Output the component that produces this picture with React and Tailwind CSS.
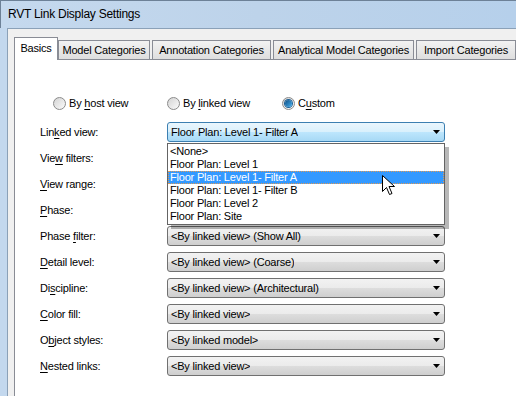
const TABS = ['Model Categories', 'Annotation Categories', 'Analytical Model Categories', 'Import Categories']

const TAB_W = [92, 119, 141, 100]

const LIST = ['<None>', 'Floor Plan: Level 1', 'Floor Plan: Level 1- Filter A', 'Floor Plan: Level 1- Filter B', 'Floor Plan: Level 2', 'Floor Plan: Site']

// label split as [before, mnemonic, after]
const ROWS = [
  { label: ['Lin', 'k', 'ed view:'], value: 'Floor Plan: Level 1- Filter A', open: true },
  { label: ['Vie', 'w', ' filters:'] },
  { label: ['', 'V', 'iew range:'] },
  { label: ['', 'P', 'hase:'] },
  { label: ['Phase ', 'f', 'ilter:'], value: '<By linked view> (Show All)' },
  { label: ['', 'D', 'etail level:'], value: '<By linked view> (Coarse)' },
  { label: ['Di', 's', 'cipline:'], value: '<By linked view> (Architectural)' },
  { label: ['', 'C', 'olor fill:'], value: '<By linked view>' },
  { label: ['O', 'b', 'ject styles:'], value: '<By linked model>' },
  { label: ['', 'N', 'ested links:'], value: '<By linked view>' },
]

function Mnemonic({ parts }) {
  return (
    <span>
      {parts[0]}
      <span className="underline underline-offset-[2px]">{parts[1]}</span>
      {parts[2]}
    </span>
  )
}

function Arrow() {
  return (
    <svg width="7" height="4" viewBox="0 0 7 4" className="shrink-0">
      <path d="M0 0h7L3.5 4z" fill="#000" />
    </svg>
  )
}

function Radio({ checked, label, className }) {
  return (
    <div className={'flex h-[13px] items-center gap-[3px] ' + (className || '')}>
      <span className="flex h-[13px] w-[13px] items-center justify-center rounded-full border border-[#8b8b8b] bg-gradient-to-br from-[#d4d4d4] to-[#fbfbfb]">
        {checked && (
          <span className="h-[7px] w-[7px] rounded-full bg-gradient-to-br from-[#0c4f86] to-[#49b2f0] ring-1 ring-[#1b5f95]" />
        )}
      </span>
      <Mnemonic parts={label} />
    </div>
  )
}

function Combo({ value, open }) {
  const skin = open
    ? 'border-[#3c7fb1] bg-[linear-gradient(#eaf6fd,#d9f0fc_50%,#bee6fd_50%,#a7d9f5)]'
    : 'border-[#707070] bg-[linear-gradient(#f2f2f2,#ebebeb_50%,#dddddd_50%,#cfcfcf)]'
  return (
    <div className={'flex h-[20px] w-[278px] items-center justify-between rounded-[3px] border pl-[3px] pr-[4px] ' + skin}>
      <span className="truncate">{value}</span>
      {value && <Arrow />}
    </div>
  )
}

function DropList() {
  return (
    <div className="absolute left-0 top-[21px] z-20 w-[278px] border border-[#646464] bg-white py-px shadow-[4px_4px_0_rgba(0,0,0,0.28)]">
      {LIST.map((item, i) => (
        <div
          key={item}
          className={
            'flex h-[13px] items-center pl-[2px] leading-none ' +
            (i === 2 ? 'bg-[#3399ff] text-white outline-1 outline-dotted -outline-offset-1 outline-[#e09a55]' : '')
          }
        >
          {item}
        </div>
      ))}
    </div>
  )
}

function Cursor() {
  return (
    <svg width="13" height="21" viewBox="0 0 13 21" className="absolute left-[382px] top-[175px] z-30">
      <path d="M0.5 0.5v16l4-4 3 7 2.5-1-3-7h5.5z" fill="#fff" stroke="#000" strokeWidth="1" strokeLinejoin="miter" />
    </svg>
  )
}

export default function App() {
  return (
    <div className="relative h-[396px] w-[516px] overflow-hidden bg-[#c3d8ee] font-['Liberation_Sans',Arial,sans-serif] text-[11px] tracking-[-0.2px] text-black">
      <Cursor />
      <div className="flex h-[28px] items-end border-l border-t border-[#6d8197] bg-gradient-to-r from-[#c5d9ee] via-[#bdd3ea] to-[#b6d0eb] pb-[5px] pl-[7px] text-[12px] tracking-[-0.25px]">
        RVT Link Display Settings
      </div>

      <div className="ml-[7px] h-[368px] border-l border-t border-[#8ba1b8] bg-[#f0f0f0] pl-[6px] pt-[8px]">
        <div className="flex h-[22px] items-end">
          <div className="relative z-10 -mb-px flex h-[23px] w-[46px] items-center justify-center border border-b-0 border-[#898c95] bg-white pb-[2px]">
            Basics
          </div>
          {TABS.map((t, i) => (
            <div
              key={t}
              style={{ width: TAB_W[i] }}
              className={'flex h-[19px] shrink-0 items-center justify-center border border-b-0 border-[#898c95] bg-gradient-to-b from-[#f2f2f2] to-[#dedede] ' + (i ? 'ml-[2px]' : '')}
            >
              {t}
            </div>
          ))}
        </div>

        <div className="h-[340px] w-[520px] border-l border-t border-[#898c95] bg-white">
          <div className="flex pl-[38px] pt-[37px]">
            <Radio className="w-[114px]" label={['By ', 'h', 'ost view']} />
            <Radio className="w-[115px]" label={['By ', 'l', 'inked view']} />
            <Radio checked label={['C', 'u', 'stom']} />
          </div>

          <div className="mt-[12px] grid grid-cols-[127px_278px] gap-y-[6px] pl-[25px]">
            {ROWS.map((r) => (
              <div key={r.label.join('')} className="contents">
                <div className="flex h-[20px] items-center">
                  <Mnemonic parts={r.label} />
                </div>
                <div className="relative">
                  <Combo value={r.value} open={r.open} />
                  {r.open && <DropList />}
                </div>
              </div>
            ))}
          </div>
        </div>
      </div>
    </div>
  )
}
